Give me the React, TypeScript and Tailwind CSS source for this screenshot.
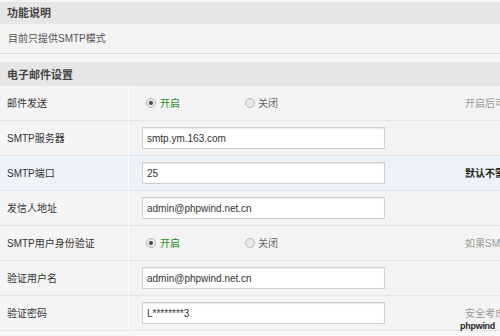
import React from "react";

interface Row {
  label: string;
  kind: "radio" | "input";
  value?: string;
  tip?: string;
  tipStrong?: boolean;
  hover?: boolean;
}

const rows: Row[] = [
  { label: "邮件发送", kind: "radio", tip: "开启后可以发送邮件" },
  { label: "SMTP服务器", kind: "input", value: "smtp.ym.163.com" },
  { label: "SMTP端口", kind: "input", value: "25", tip: "默认不需要修改", tipStrong: true, hover: true },
  { label: "发信人地址", kind: "input", value: "admin@phpwind.net.cn" },
  { label: "SMTP用户身份验证", kind: "radio", tip: "如果SMTP服务器要求身份验证" },
  { label: "验证用户名", kind: "input", value: "admin@phpwind.net.cn" },
  { label: "验证密码", kind: "input", value: "L********3", tip: "安全考虑，密码不显示" },
];

const Radio = ({ checked }: { checked?: boolean }) => (
  <span className="inline-flex w-[10px] h-[10px] rounded-full border border-[#b8b8b8] bg-[#e8e8e8] items-center justify-center">
    {checked && <span className="w-[4px] h-[4px] rounded-full bg-[#444]" />}
  </span>
);

const App: React.FC = () => {
  return (
    <div
      className="relative w-[500px] h-[336px] overflow-hidden bg-[#f6f6f6] text-[10px] text-[#333]"
      style={{ fontFamily: '"Liberation Sans", Arial, "Noto Sans CJK SC", sans-serif' }}
    >
      <div className="h-[2px] bg-[#f4f4f4]" />
      <div className="h-[22px] bg-[#e6e6e6] flex items-center px-[7px] font-bold text-[11px] text-[#444]">
        功能说明
      </div>
      <div className="h-[30px] bg-[#f3f3f3] border-b border-[#dcdcdc] flex items-center px-[8px] text-[#555]">
        目前只提供SMTP模式
      </div>
      <div className="h-[9px] bg-[#f6f6f6] border-b border-[#ececec]" />
      <div className="h-[23px] bg-[#e6e6e6] flex items-center pt-[2px] px-[7px] font-bold text-[11px] text-[#444]">
        电子邮件设置
      </div>
      {rows.map((row) => (
        <div
          key={row.label}
          className={`h-[35px] flex border-b border-[#e4e4e4] ${row.hover ? "bg-[#edf2f6]" : "bg-[#f3f3f3]"}`}
        >
          <div
            className={`w-[129px] shrink-0 flex items-center pl-[7px] border-r border-[#ffffff] ${
              row.hover ? "bg-[#eef3f7]" : "bg-[#f5f5f5]"
            }`}
          >
            {row.label}
          </div>
          <div className="w-[335px] shrink-0 flex items-center pl-[13px]">
            {row.kind === "input" ? (
              <div className="w-[243px] h-[22px] bg-white border border-[#cfcfcf] shadow-[inset_0_1px_1px_rgba(0,0,0,0.08)] flex items-center px-[4px] text-[10px] text-[#333]">
                {row.value}
              </div>
            ) : (
              <div className="flex items-center ml-[4px]">
                <Radio checked />
                <span className="ml-[4px] text-[#2b8a2b]">开启</span>
                <span className="ml-[65px] flex items-center">
                  <Radio />
                  <span className="ml-[3px] text-[#666]">关闭</span>
                </span>
              </div>
            )}
          </div>
          <div
            className={`flex-1 flex items-center pl-[1px] whitespace-nowrap overflow-hidden ${
              row.tipStrong ? "text-[#222] font-bold" : "text-[#999]"
            }`}
          >
            {row.tip}
          </div>
        </div>
      ))}
      <div
        className="absolute right-[5px] bottom-[3px] text-[9px] font-bold text-[#222] tracking-[-0.3px]"
        style={{ textShadow: "0 0 2px #fff, 0 0 2px #fff" }}
      >
        phpwind
      </div>
    </div>
  );
};

export default App;
